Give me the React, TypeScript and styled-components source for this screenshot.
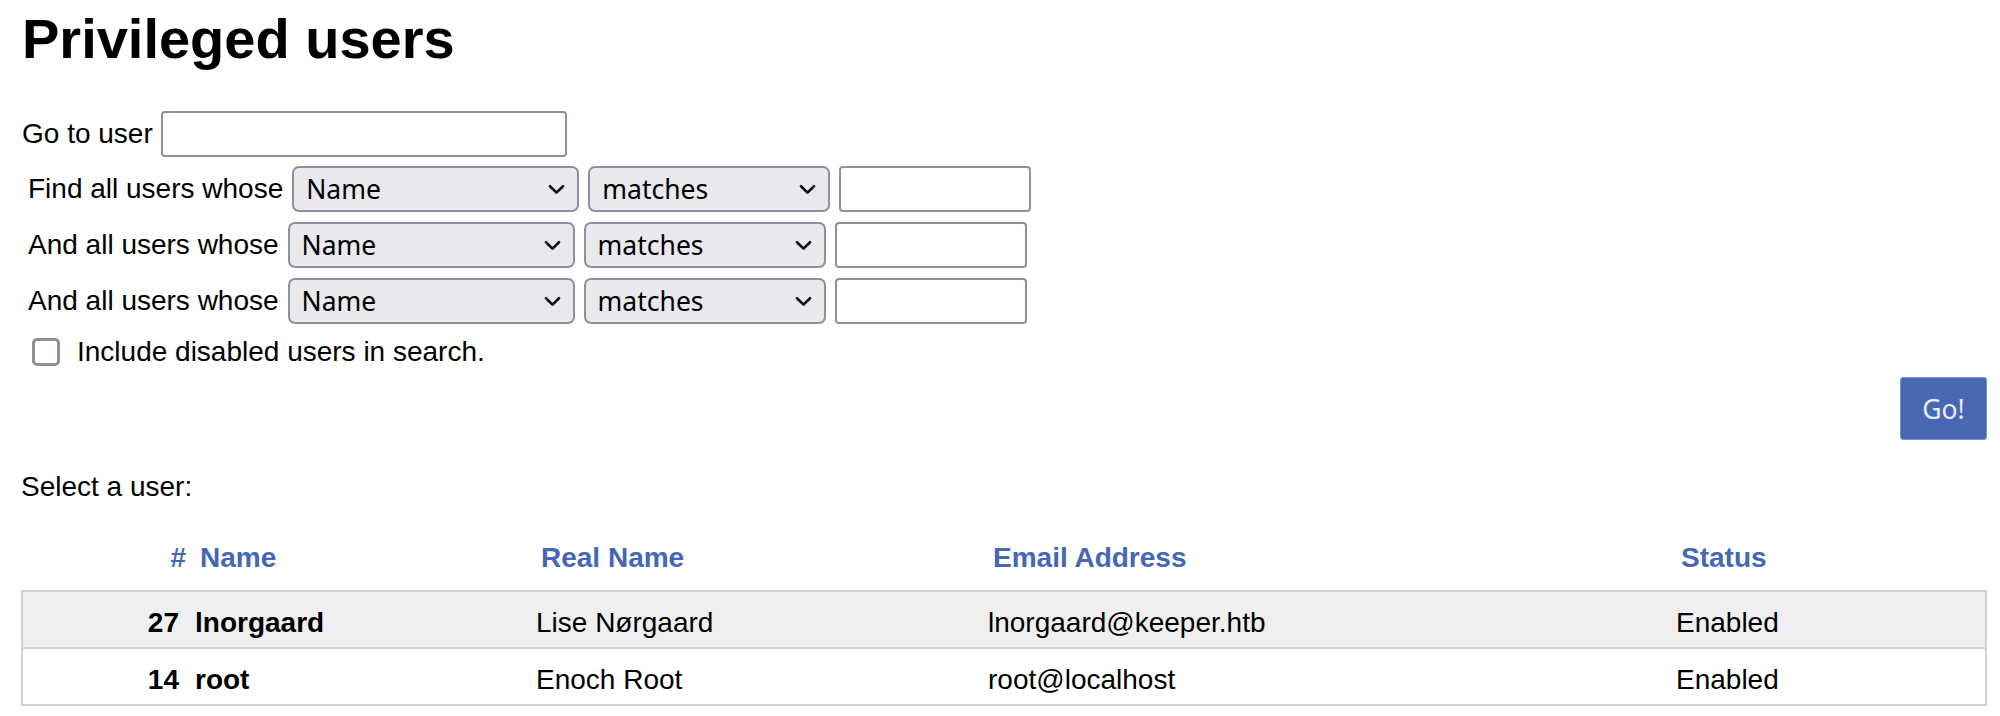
import React from "react";
import styled, { createGlobalStyle } from "styled-components";

const GlobalStyle = createGlobalStyle`
  html, body {
    margin: 0;
    padding: 0;
    background: #ffffff;
  }
  body {
    font-family: "Liberation Sans", Arial, sans-serif;
    font-size: 28px;
    line-height: 32px;
    color: #000000;
  }
  * { box-sizing: border-box; }
`;

const Page = styled.div`
  padding: 7px 13px 12px 21px;
`;

const Title = styled.h1`
  margin: 0 0 0 1px;
  font-size: 56px;
  line-height: 64px;
  font-weight: 700;
`;

const GotoRow = styled.div`
  display: flex;
  align-items: center;
  gap: 8px;
  margin-top: 40px;
  padding-left: 1px;
  height: 46px;
`;

const Label = styled.span`
  white-space: nowrap;
  font-size: 28px;
  line-height: 32px;
`;

const TextInput = styled.input<{ $w: number }>`
  width: ${(p) => p.$w}px;
  height: 46px;
  border: 2px solid #8f8f9d;
  border-radius: 4px;
  background: #ffffff;
  padding: 0 8px;
  font-family: "Noto Sans", sans-serif;
  font-size: 26px;
  outline: none;
`;

const SearchBlock = styled.div`
  display: flex;
  flex-direction: column;
  gap: 10px;
  margin-top: 9px;
  padding-left: 7px;
`;

const SearchRow = styled.div`
  display: flex;
  align-items: center;
  gap: 9px;
  height: 46px;
`;

const SelectWrap = styled.div<{ $w: number }>`
  position: relative;
  width: ${(p) => p.$w}px;
  height: 46px;
`;

const Select = styled.select`
  appearance: none;
  -webkit-appearance: none;
  width: 100%;
  height: 46px;
  background: #e9e9ed;
  border: 2px solid #8f8f9d;
  border-radius: 7px;
  padding: 0 44px 0 12px;
  font-family: "Noto Sans", sans-serif;
  font-size: 26.5px;
  color: #000000;
  outline: none;
`;

const Chevron = styled.svg`
  position: absolute;
  right: 14px;
  top: 50%;
  width: 17px;
  height: 11px;
  margin-top: -5px;
  pointer-events: none;
`;

const CheckRow = styled.label`
  display: flex;
  align-items: center;
  gap: 17px;
  margin-top: 12px;
  padding-left: 11px;
  height: 32px;
`;

const Checkbox = styled.input`
  appearance: none;
  -webkit-appearance: none;
  margin: 0;
  width: 28px;
  height: 28px;
  border: 3px solid #8f8f9d;
  border-radius: 5px;
  background: #ffffff;
`;

const ActionRow = styled.div`
  display: flex;
  justify-content: flex-end;
  margin-top: 9px;
`;

const GoButton = styled.button`
  width: 87px;
  height: 63px;
  background: #4868b4;
  color: #e8eef8;
  border: 1px solid #7b93cc;
  border-radius: 3px;
  font-family: "Noto Sans", sans-serif;
  font-size: 26.5px;
  padding: 0;
`;

const Intro = styled.p`
  margin: 31px 0 0;
  font-size: 28px;
  line-height: 32px;
`;

const Table = styled.div`
  margin-top: 39px;
`;

const columns = "166px 341px 452px 688px 1fr";

const HeaderRow = styled.div`
  display: grid;
  grid-template-columns: ${columns};
  border-left: 2px solid transparent;
  border-right: 2px solid transparent;
  padding-bottom: 16px;
`;

const HeadCell = styled.div<{ $num?: boolean }>`
  font-weight: 700;
  color: #4567b5;
  line-height: 32px;
  white-space: nowrap;
  text-align: ${(p) => (p.$num ? "right" : "left")};
  padding: ${(p) => (p.$num ? "0 3px 0 0" : "0 0 0 11px")};
`;

const Body = styled.div`
  border: 2px solid #d2d2d2;
`;

const Row = styled.div<{ $odd: boolean }>`
  display: grid;
  grid-template-columns: ${columns};
  background: ${(p) => (p.$odd ? "#efefef" : "#ffffff")};
  & + & {
    border-top: 2px solid #d2d2d2;
  }
`;

const Cell = styled.div<{ $num?: boolean; $bold?: boolean }>`
  line-height: 32px;
  padding: ${(p) => (p.$num ? "15px 10px 8px 0" : "15px 0 8px 6px")};
  text-align: ${(p) => (p.$num ? "right" : "left")};
  font-weight: ${(p) => (p.$bold ? 700 : 400)};
  white-space: nowrap;
`;

const ChevronIcon = () => (
  <Chevron viewBox="0 0 17 11" fill="none">
    <path d="M2 2.2 L8.5 8.6 L15 2.2" stroke="#111111" strokeWidth="2.7" strokeLinecap="round" strokeLinejoin="round" />
  </Chevron>
);

const Dropdown = ({ w, value, options }: { w: number; value: string; options: string[] }) => (
  <SelectWrap $w={w}>
    <Select defaultValue={value}>
      {options.map((o) => (
        <option key={o} value={o}>
          {o}
        </option>
      ))}
    </Select>
    <ChevronIcon />
  </SelectWrap>
);

const fieldOptions = ["Name", "Email Address", "Real Name", "Organization", "Nickname"];
const opOptions = ["matches", "doesn't match", "is", "isn't"];

const searchLabels = ["Find all users whose", "And all users whose", "And all users whose"];

const users = [
  { id: 27, name: "lnorgaard", real: "Lise Nørgaard", email: "lnorgaard@keeper.htb", status: "Enabled" },
  { id: 14, name: "root", real: "Enoch Root", email: "root@localhost", status: "Enabled" },
];

export default function App() {
  return (
    <>
      <GlobalStyle />
      <Page>
        <Title>Privileged users</Title>
        <GotoRow>
          <Label>Go to user</Label>
          <TextInput $w={406} type="text" />
        </GotoRow>
        <SearchBlock>
          {searchLabels.map((l, i) => (
            <SearchRow key={i}>
              <Label>{l}</Label>
              <Dropdown w={287} value="Name" options={fieldOptions} />
              <Dropdown w={242} value="matches" options={opOptions} />
              <TextInput $w={192} type="text" />
            </SearchRow>
          ))}
        </SearchBlock>
        <CheckRow>
          <Checkbox type="checkbox" />
          <Label>Include disabled users in search.</Label>
        </CheckRow>
        <ActionRow>
          <GoButton type="button">Go!</GoButton>
        </ActionRow>
        <Intro>Select a user:</Intro>
        <Table>
          <HeaderRow>
            <HeadCell $num>#</HeadCell>
            <HeadCell>Name</HeadCell>
            <HeadCell>Real Name</HeadCell>
            <HeadCell>Email Address</HeadCell>
            <HeadCell>Status</HeadCell>
          </HeaderRow>
          <Body>
            {users.map((u, i) => (
              <Row key={u.id} $odd={i % 2 === 0}>
                <Cell $num $bold>
                  {u.id}
                </Cell>
                <Cell $bold>{u.name}</Cell>
                <Cell>{u.real}</Cell>
                <Cell>{u.email}</Cell>
                <Cell>{u.status}</Cell>
              </Row>
            ))}
          </Body>
        </Table>
      </Page>
    </>
  );
}
